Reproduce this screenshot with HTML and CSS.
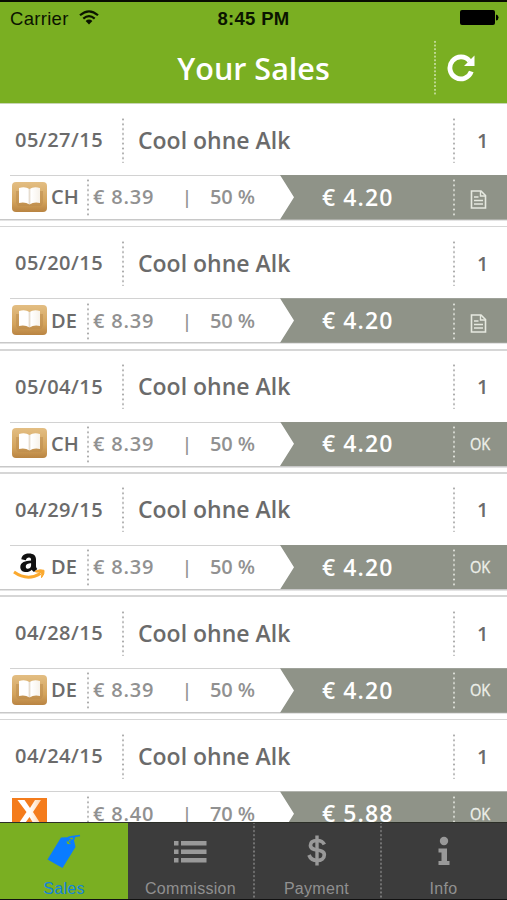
FILE: index.html
```
<!DOCTYPE html>
<html lang="en">
<head>
<meta charset="utf-8">
<title>Your Sales</title>
<link rel="stylesheet" href="styles.css">
</head>
<body>
<svg class="defs" aria-hidden="true">
  <defs>
    <linearGradient id="wood" x1="0" y1="0" x2="0" y2="1"><stop offset="0" stop-color="#e3be83"/><stop offset=".65" stop-color="#d3a35c"/><stop offset="1" stop-color="#b98442"/></linearGradient>
    <linearGradient id="page" x1="0" x2="1"><stop offset="0" stop-color="#fff"/><stop offset=".42" stop-color="#fff"/><stop offset=".5" stop-color="#e6ddd0"/><stop offset=".58" stop-color="#fff"/><stop offset="1" stop-color="#f7f2ea"/></linearGradient>
    <linearGradient id="xfade" x1="0" x2="1"><stop offset="0" stop-color="#fff"/><stop offset=".5" stop-color="#fff"/><stop offset="1" stop-color="#ffd2a6"/></linearGradient>
  </defs>
  <symbol id="books" viewBox="0 0 35 30">
    <rect width="35" height="30" rx="4" fill="url(#wood)"/>
    <path d="M4 9h27v12l-2 3H6l-2-3z" fill="#b98a4b" opacity=".5"/>
    <path d="M7 6Q13 4 17.500 7Q22 4 28 6V21Q22 19.500 17.500 22.500Q13 19.500 7 21z" fill="url(#page)"/>
  </symbol>
  <symbol id="amazon" viewBox="0 0 35 30">
    <path d="M9.300 7.200C10 3 13 1.500 17 1.500c4.500 0 7 2 7 6v6.500c0 1.200.4 2 1.300 3L22 20c-1-.7-1.700-1.400-2.200-2.300-3.600 4-11.500 2.800-11.500-2.500 0-5 5-6.500 10.800-6.700 0-2-.4-3-2.100-3-1.700 0-2.700 1-3.100 2.700zM19.100 11.200c-3 0-5.300.8-5.300 3.500 0 3.500 5.300 2.400 5.300-1.500z" fill="#111"/>
    <path d="M2 20Q15.500 29.500 28.500 21.500" fill="none" stroke="#fba92e" stroke-width="3"/>
    <path d="M23.500 19q4.500-2 8.500-.7q.8 3.600-2.500 7.400q.7-3.600-.3-5q-2-.8-5.700-.7z" fill="#fba92e" stroke="#fba92e" stroke-width="1"/>
  </symbol>
  <symbol id="xinxii" viewBox="0 0 35 30">
    <rect width="35" height="30" fill="#f47c1c"/>
    <path d="M5.500 2h7l5.500 8 5-8h6L21 14 30 28h-7l-5.500-9L11 28H5l9.500-14z" fill="url(#xfade)"/>
  </symbol>
  <symbol id="doc" viewBox="0 0 16 19">
    <path d="M1 1h9.500l4.500 4.500V18H1z" fill="none" stroke="#e6e9e0" stroke-width="1.600"/>
    <path d="M10 1v5h5" fill="none" stroke="#e6e9e0" stroke-width="1.400"/>
    <path d="M3.500 7h4.500M3.500 10.500h9M3.500 14h9" stroke="#e6e9e0" stroke-width="1.700"/>
  </symbol>
</svg>

<div class="app">
  <header class="top">
    <div class="status">
      <div class="carrier"><span>Carrier</span>
        <svg width="20" height="15" viewBox="0 0 20 15"><g fill="none" stroke="#0b1400" stroke-width="2.200"><path d="M1 5.300Q10-2.700 19 5.300"/><path d="M4.300 8.700Q10 3.700 15.700 8.700"/></g><path d="M6.600 10.900Q10 8 13.400 10.900L10 14.500z" fill="#0b1400"/></svg>
      </div>
      <div class="clock">8:45 PM</div>
      <svg class="battery" width="39" height="15" viewBox="0 0 39 15"><rect width="35" height="15" rx="2"/><path d="M36 4.500q2.500.5 2.500 3t-2.500 3z"/></svg>
    </div>
    <div class="bar">
      <h1>Your Sales</h1>
      <button class="refresh" aria-label="Refresh">
        <svg width="28" height="28" viewBox="0 0 28 28"><path d="M24.300 17.500A11 11 0 1 1 22.500 7" fill="none" stroke="#fff" stroke-width="4.800"/><path d="M27.500 1.500v10.500H17z" fill="#fff"/></svg>
      </button>
    </div>
  </header>
  <main class="list" id="list"></main>
  <nav class="tabs">
    <a class="tab active"><svg width="34" height="35" viewBox="0 0 34 35"><path d="M14 3.500L20 3.200L27 6.500L28.500 13L15.500 34L.5 25.500z" fill="#0a7cff"/><circle cx="21.800" cy="8" r="2.200" fill="#79b021"/><path d="M21.500 7.500Q19 3 24 2.800L33 1.500M22 8.500Q26 8.500 27.500 3" fill="none" stroke="#0a7cff" stroke-width="1.700"/></svg><span>Sales</span></a>
    <a class="tab"><svg width="34" height="35" viewBox="0 0 34 35"><path d="M0 7h4.500v4.500H0zM7 7h25.500v4.500H7zM0 15.500h4.500V20H0zM7 15.500h25.500V20H7zM0 24h4.500v4.500H0zM7 24h25.500v4.500H7z" fill="#999"/></svg><span>Commission</span></a>
    <a class="tab dotted"><svg width="34" height="35" viewBox="0 0 34 35"><path d="M24.300 10.500C23 7.500 20.500 6.500 17 6.500c-4 0-6.500 1.800-6.500 4.800 0 7.200 13.800 2.300 13.800 9.500 0 3.600-3 5.700-7 5.700-4.500 0-7-2-8.300-5.500" fill="none" stroke="#999" stroke-width="3.700"/><path d="M17 1.500v30" stroke="#999" stroke-width="3.400"/></svg><span>Payment</span></a>
    <a class="tab dotted"><svg width="34" height="35" viewBox="0 0 34 35"><circle cx="17" cy="7" r="4.200" fill="#999"/><path d="M11.500 14.500H20V27h2.500v4h-11v-4h3v-8.500h-3z" fill="#999"/></svg><span>Info</span></a>
  </nav>
</div>
<script src="app.js"></script>
</body>
</html>
```
FILE: app.js
```
const sales = [
  ["05/27/15", "books", "CH", "8.39", "50", "4.20", false],
  ["05/20/15", "books", "DE", "8.39", "50", "4.20", false],
  ["05/04/15", "books", "CH", "8.39", "50", "4.20", true],
  ["04/29/15", "amazon", "DE", "8.39", "50", "4.20", true],
  ["04/28/15", "books", "DE", "8.39", "50", "4.20", true],
  ["04/24/15", "xinxii", "", "8.40", "70", "5.88", true]
];

document.getElementById("list").innerHTML = sales.map(([date, shop, land, price, share, sum, ok]) => `
  <article class="sale">
    <div class="summary">
      <div class="date"><span>${date}</span></div>
      <div class="title"><span>Cool ohne Alk</span></div>
      <div class="count">1</div>
    </div>
    <div class="detail">
      <div class="shop"><svg width="35" height="30"><use href="#${shop}"/></svg><span>${land}</span></div>
      <div class="price">€ ${price}</div>
      <div class="sep">|</div>
      <div class="share">${share} %</div>
      <div class="earned"><span class="sum">€ ${sum}</span>
        <div class="state">${ok ? "<span>OK</span>" : '<svg width="17" height="19"><use href="#doc"/></svg>'}</div>
      </div>
    </div>
  </article>`).join("");
```
FILE: styles.css
```
* { box-sizing: border-box; }
body { margin: 0; background: #fff; font-family: "Open Sans", "Noto Sans", sans-serif; }
.defs { position: absolute; width: 0; height: 0; }
.app { width: 507px; height: 900px; display: flex; flex-direction: column; overflow: hidden; }

.top { flex: none; height: 103px; background: #7aaf22; border-top: 2px solid #090d02; }
.status { height: 33px; display: grid; grid-template-columns: 1fr auto 1fr; align-items: center; padding: 0 8px 0 10px; font-family: "Liberation Sans", Arial, sans-serif; font-size: 18.500px; color: #0b1400; }
.carrier { display: flex; align-items: center; gap: 10px; letter-spacing: .3px; }
.carrier svg { margin-top: -3px; }
.clock { font-weight: 700; font-size: 18.500px; letter-spacing: .3px; position: relative; left: -1px; }
.battery { justify-self: end; margin-top: -2px; }
.bar { height: 68px; display: flex; }
.bar h1 { flex: 1; margin: 0; padding-left: 73px; color: #fff; font-size: 30.500px; line-height: 67px; font-weight: 600; text-align: center; white-space: nowrap; }
.refresh { width: 73px; border: 0; padding: 0 0 0 13px; margin: 5px 0 8px; text-align: left; background: radial-gradient(circle, rgba(255,255,255,.5) .8px, transparent 1.300px) 0 0 / 2px 3.700px repeat-y; }
.refresh svg { display: block; }

.list { flex: 1; min-height: 0; overflow: hidden; border-top: 1px solid #c8d5b5; }
.sale { height: 123.300px; color: #6b6b6b; font-weight: 600; background: linear-gradient(#c8c8c8, #c8c8c8) 0 115px / 100% 1.500px no-repeat, linear-gradient(#d6d6d6, #d6d6d6) 0 121.500px / 100% 2px no-repeat; }
.summary { height: 71px; display: grid; grid-template-columns: 122px 331px 1fr; align-items: center; }
.date { padding-left: 15px; font-size: 20px; letter-spacing: .5px; }
.title, .count { height: 46px; line-height: 46px; background: radial-gradient(circle, #aaa .8px, transparent 1.250px) 0 0 / 2px 4.850px repeat-y; }
.title { padding-left: 16px; font-size: 23px; }
.count { padding-left: 24px; font-size: 20px; line-height: 48px; }
.detail { height: 44.500px; margin-left: 10px; display: flex; align-items: center; background: linear-gradient(#d2d2d2, #d2d2d2) 0 0 / 100% 1px no-repeat; font-size: 20px; white-space: nowrap; }
.shop { width: 77px; display: flex; align-items: center; gap: 4px; padding: 0 0 1px 2px; }
.shop svg { flex: none; }
.price { width: 96px; height: 38px; line-height: 38px; padding-left: 6px; color: #919191; letter-spacing: .8px; background: radial-gradient(circle, #aaa .8px, transparent 1.250px) 0 0 / 2px 4.850px repeat-y; }
.sep { width: 17px; color: #919191; font-size: 18px; text-indent: -1px; }
.share { width: 74px; flex: none; padding: 0 0 1px 10px; color: #919191; letter-spacing: -.1px; margin-right: 6px; }
.earned { flex: 1; height: 44.500px; display: flex; align-items: center; background: #8f9388; clip-path: polygon(0 0, 100% 0, 100% 100%, 0 100%, 14px 50%); color: #fff; }
.sum { width: 173px; padding: 0 0 1px 42px; font-size: 23px; letter-spacing: 1.100px; }
.state { height: 38px; flex: 1; display: flex; align-items: center; padding-left: 17px; font-size: 17px; font-weight: 400; color: #eef0ea; background: radial-gradient(circle, #dfe1da .8px, transparent 1.250px) 0 0 / 2px 4.850px repeat-y; }
.state span { transform: scaleX(.86); transform-origin: left; padding-bottom: 1px; -webkit-text-stroke: .3px #eef0ea; }
.state svg { margin-top: 5px; }

.tabs { flex: none; height: 78px; display: grid; grid-template-columns: 128px 125px 127px 127px; background: #3c3c3c; border-top: 1px solid #2c2f28; border-bottom: 1px solid #111; }
.tab { display: flex; flex-direction: column; align-items: center; padding-top: 11px; color: #909090; font: 16px/20px "Liberation Sans", Arial, sans-serif; letter-spacing: .3px; }
.tab svg { flex: none; margin-bottom: 10px; }
.active { background: #7aaf22; color: #1484dc; }
.dotted { background: radial-gradient(circle, #777 .8px, transparent 1.200px) 0 6px / 2px 4.100px repeat-y; }
```
